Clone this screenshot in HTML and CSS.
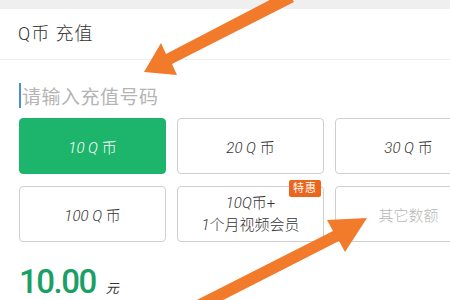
FILE: index.html
```html
<!DOCTYPE html>
<html lang="zh-CN">
<head>
    <meta charset="UTF-8">
    <meta name="viewport" content="width=device-width, initial-scale=1.0">
    <title>Q币充值</title>
    <link rel="stylesheet" href="styles.css">
</head>
<body>
    <div class="top-strip"></div>
    <header class="title-bar">Q币 充值</header>

    <div class="account-row">
        <span class="caret"></span>
        <span class="placeholder">请输入充值号码</span>
    </div>

    <div class="grid-clip">
        <div class="amount-grid">
            <div class="amount active"><span><i>10 Q</i> 币</span></div>
            <div class="amount"><span><i>20 Q</i> 币</span></div>
            <div class="amount"><span><i>30 Q</i> 币</span></div>
            <div class="amount"><span><i>100 Q</i> 币</span></div>
            <div class="amount combo">
                <span class="badge">特惠</span>
                <span><i>10Q</i>币+</span>
                <span><i>1</i>个月视频会员</span>
            </div>
            <div class="amount other"><span>其它数额</span></div>
        </div>
    </div>

    <div class="price">
        <span class="price-value">10.00</span>
        <span class="price-unit">元</span>
    </div>

    <svg class="arrows" width="450" height="300" viewBox="0 0 450 300">
        <polygon points="144,72 161,43 166,54 287,-9 294,2 172,64 177,75" fill="#f27a2b"/>
        <polygon points="367,218 327,220 333,231 177,310 182,321 339,241 345,252" fill="#f27a2b"/>
    </svg>
</body>
</html>
```

FILE: styles.css
```css
body, html {
    margin: 0;
    padding: 0;
    height: 100%;
    overflow: hidden;
    background-color: #fff;
    font-family: Roboto, "Noto Sans CJK SC", sans-serif;
    color: #333;
}
body {
    position: relative;
}
.top-strip {
    height: 9px;
    background-color: #efefef;
}
.title-bar {
    height: 50px;
    line-height: 50px;
    padding-left: 18px;
    font-size: 18px;
    letter-spacing: 1px;
    font-weight: 300;
    border-bottom: 1px solid #eeeeee;
}
.account-row {
    display: flex;
    align-items: center;
    height: 26px;
    padding: 22px 0 10px 19px;
}
.caret {
    width: 2px;
    height: 25px;
    background-color: #4a90d9;
    margin-right: 1px;
}
.placeholder {
    font-size: 19px;
    color: #b4b4b4;
    letter-spacing: 0.5px;
}
.grid-clip {
    overflow: hidden;
}
.amount-grid {
    display: grid;
    grid-template-columns: repeat(3, 147px);
    grid-auto-rows: 56px;
    gap: 12px 11px;
    padding: 0 0 0 19px;
    width: 482px;
    box-sizing: border-box;
}
.amount {
    position: relative;
    display: flex;
    flex-direction: column;
    align-items: center;
    justify-content: center;
    border: 1px solid #cfcfcf;
    border-radius: 4px;
    font-size: 15px;
    font-weight: 300;
    color: #333;
    white-space: nowrap;
    box-sizing: border-box;
}
.amount i {
    font-style: italic;
}
.amount.active {
    background-color: #1db46b;
    border-color: #1db46b;
    color: #fff;
}
.amount.combo {
    line-height: 22px;
}
.amount.other {
    color: #b8b8b8;
}
.badge {
    position: absolute;
    top: -7px;
    right: 2px;
    background-color: #ea651d;
    color: #fff;
    font-size: 11px;
    font-weight: 400;
    line-height: 17px;
    padding: 0 4px;
    border-radius: 2px;
    letter-spacing: 1px;
}
.price {
    margin-top: 20px;
    padding-left: 19px;
    height: 40px;
    line-height: 40px;
}
.price-value {
    font-size: 33px;
    font-weight: 500;
    color: #1a9f64;
    letter-spacing: -1.5px;
}
.price-unit {
    font-size: 13px;
    font-style: italic;
    margin-left: 6px;
}
.arrows {
    position: absolute;
    top: 0;
    left: 0;
    pointer-events: none;
}
```
